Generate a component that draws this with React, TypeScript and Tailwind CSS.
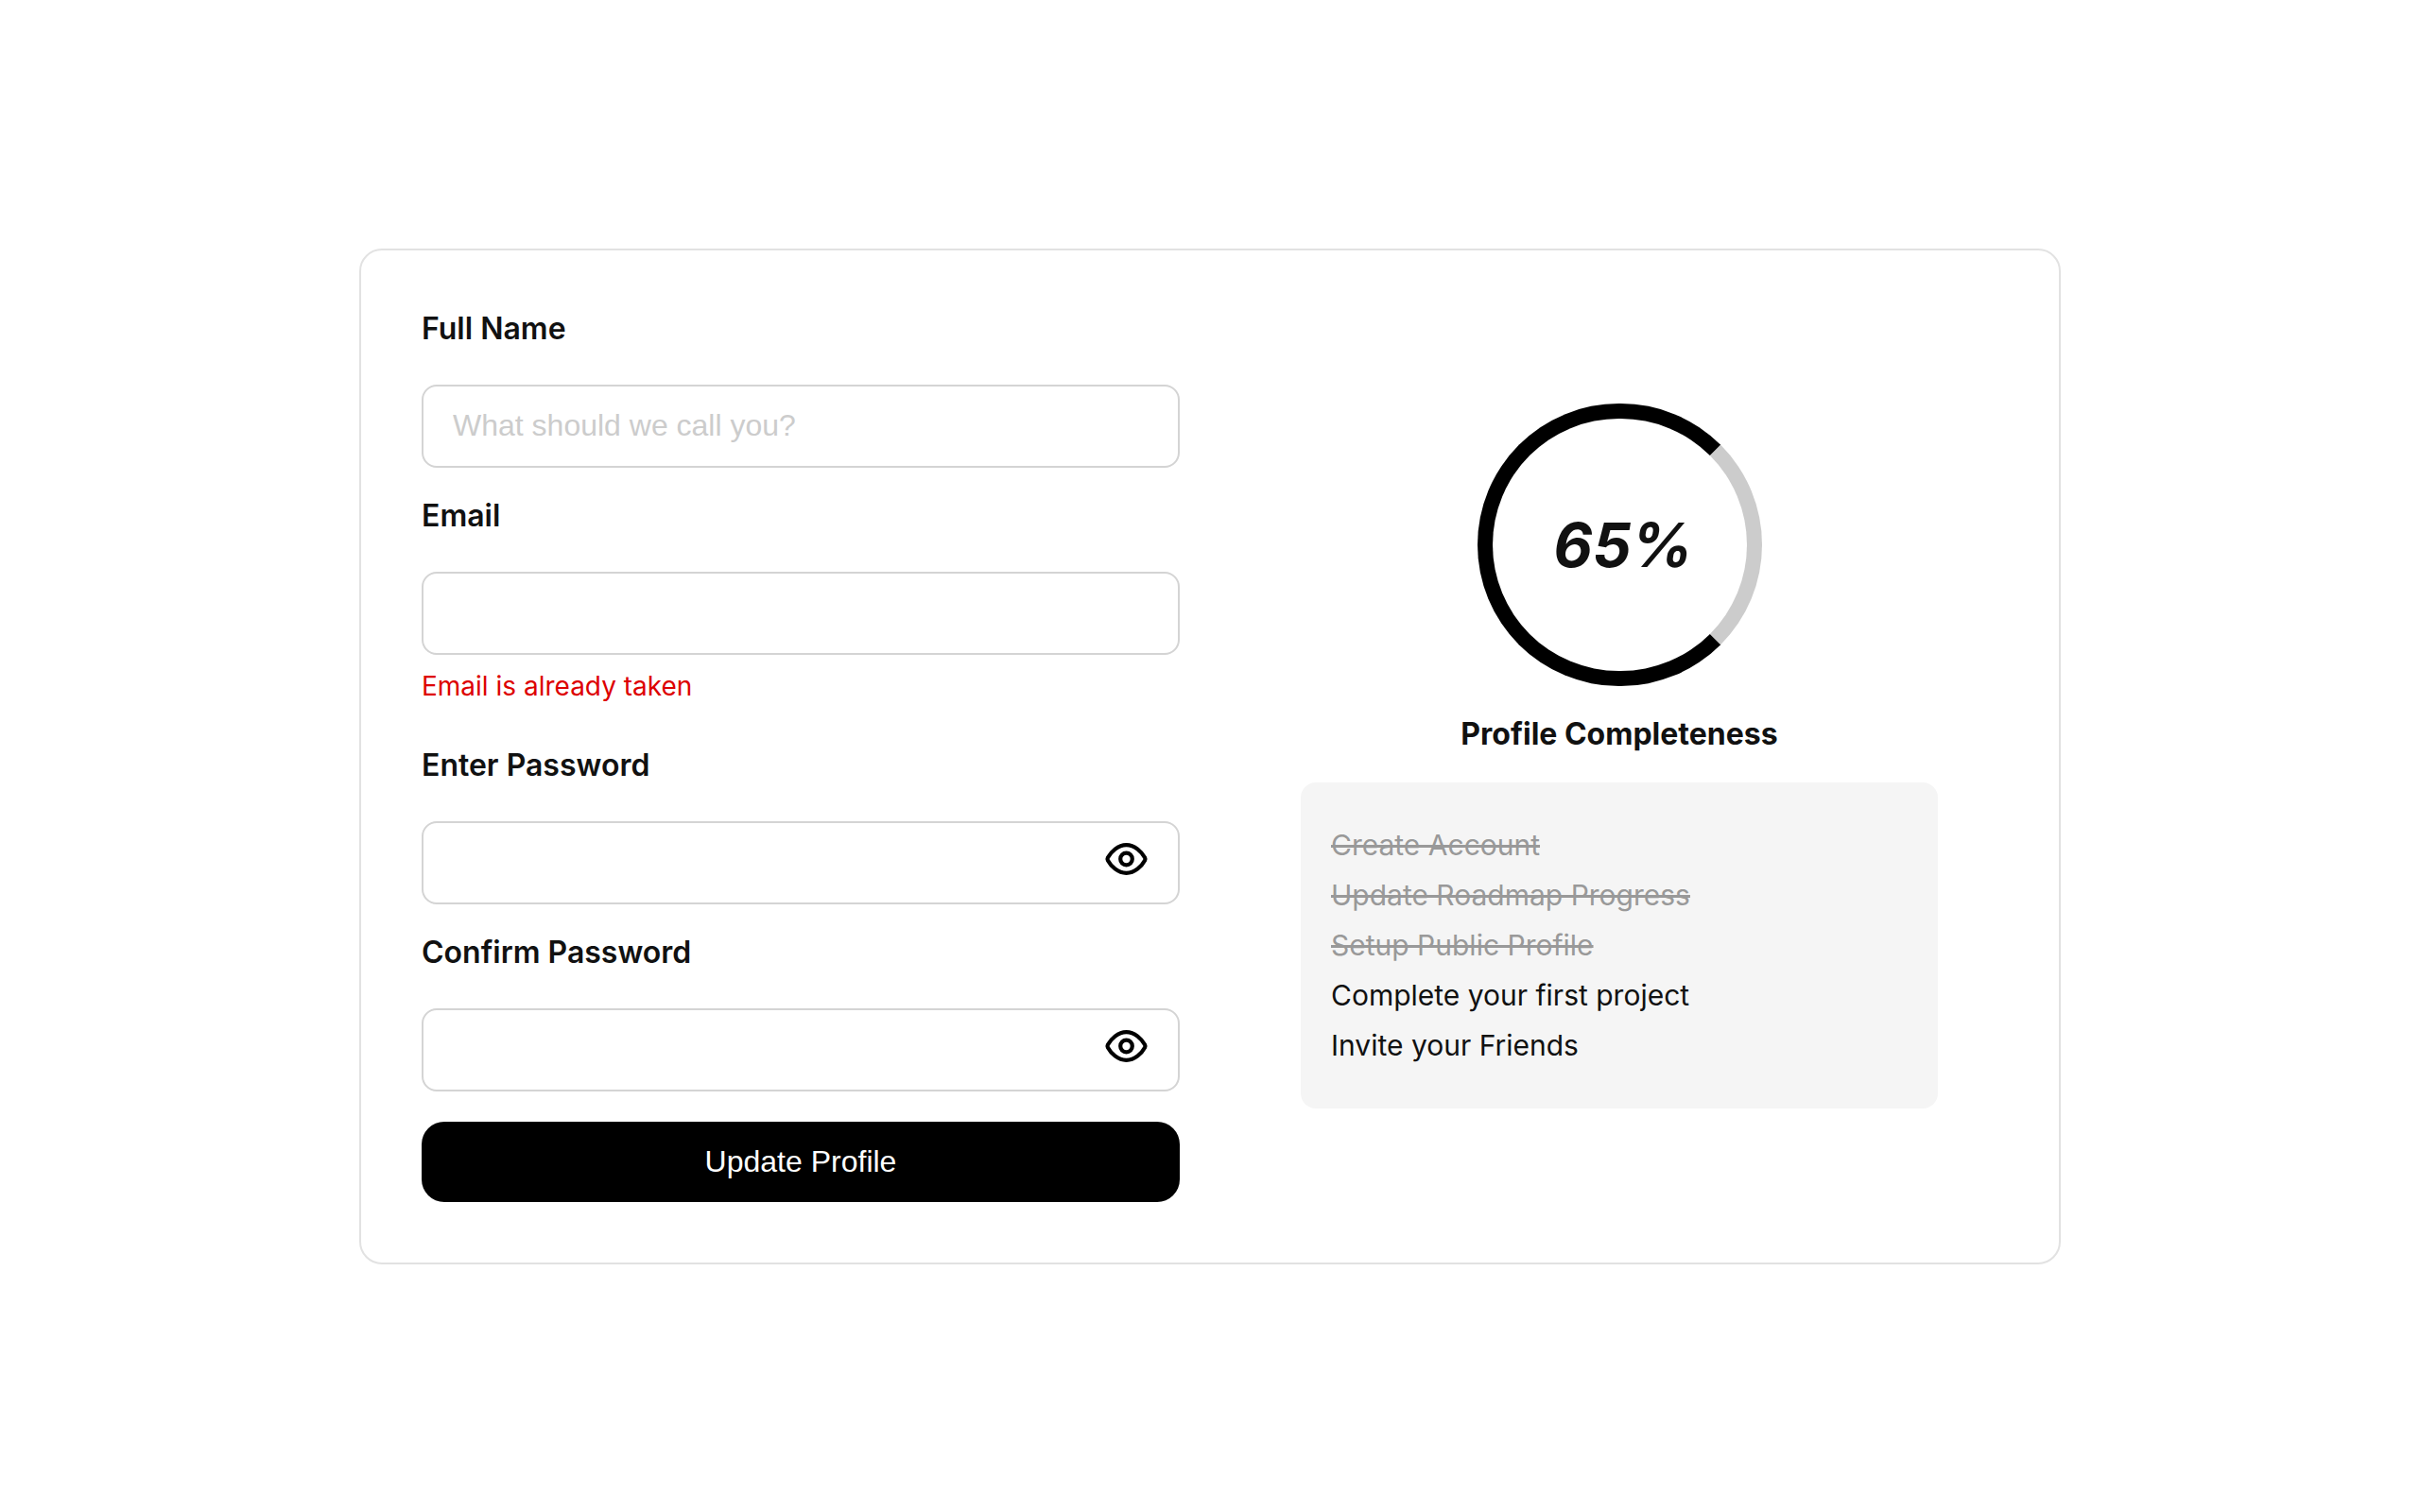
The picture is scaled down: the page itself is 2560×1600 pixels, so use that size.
import React, { useState } from "react";

const labelClass = "text-[32px] leading-[38px] font-semibold text-[#111111]";
const inputClass =
  "h-[88px] w-full rounded-2xl border-2 border-[#d4d4d4] bg-white px-[31px] font-['Liberation_Sans',Arial,sans-serif] text-[32px] text-[#111111] outline-none placeholder:text-[#cccccc]";

function EyeIcon() {
  return (
    <svg viewBox="0 0 48 48" className="size-12" fill="none" stroke="#000" strokeWidth="4.2" aria-hidden="true">
      <path
        d="M3.900 22.500C7.200 16.500 14.500 9.100 23.500 9.100s16.300 7.400 19.600 13.400c.5.900.5 2.100 0 3C39.800 31.500 32.500 38.900 23.500 38.900S7.200 31.500 3.900 25.500c-.5-.9-.5-2.100 0-3Z"
        strokeLinejoin="round"
      />
      <circle cx="23.500" cy="24" r="6.300" />
    </svg>
  );
}

function PasswordField({ id, label }: { id: string; label: string }) {
  const [visible, setVisible] = useState(false);
  return (
    <div className="flex flex-col gap-10">
      <label htmlFor={id} className={labelClass}>
        {label}
      </label>
      <div className="relative">
        <input id={id} type={visible ? "text" : "password"} className={inputClass} />
        <button
          type="button"
          aria-label={`Show ${label}`}
          onClick={() => setVisible(!visible)}
          className="absolute top-4 right-8"
        >
          <EyeIcon />
        </button>
      </div>
    </div>
  );
}

const tasks = [
  { name: "Create Account", done: true },
  { name: "Update Roadmap Progress", done: true },
  { name: "Setup Public Profile", done: true },
  { name: "Complete your first project", done: false },
  { name: "Invite your Friends", done: false },
];

export default function App() {
  return (
    <main className="flex min-h-screen items-center justify-center bg-white font-['Inter',sans-serif] text-[#111111]">
      <section className="grid w-full max-w-[1800px] grid-cols-2 gap-16 rounded-3xl border-2 border-[#e2e2e2] p-16">
        <form className="flex flex-col gap-8" onSubmit={(e) => e.preventDefault()}>
          <div className="flex flex-col gap-10">
            <label htmlFor="name" className={labelClass}>
              Full Name
            </label>
            <input id="name" type="text" placeholder="What should we call you?" className={inputClass} />
          </div>
          <div className="flex flex-col gap-10">
            <label htmlFor="email" className={labelClass}>
              Email
            </label>
            <div>
              <input id="email" type="email" aria-describedby="email-error" className={inputClass} />
              <p id="email-error" className="pt-4 pb-4 text-[28px] leading-[34px] text-[#dd0000]">
                Email is already taken
              </p>
            </div>
          </div>
          <PasswordField id="password" label="Enter Password" />
          <PasswordField id="confirm" label="Confirm Password" />
          <button
            type="submit"
            className="h-[85px] rounded-3xl bg-black font-['Liberation_Sans',Arial,sans-serif] text-[32px] text-white"
          >
            Update Profile
          </button>
        </form>
        <aside className="flex flex-col items-center justify-center px-16">
          <div className="flex h-[299px] w-[301px] items-center justify-center rounded-full border-16 border-black border-r-[#cccccc] pl-2">
            <span className="text-[64px] leading-none font-bold italic">65%</span>
          </div>
          <h2 className="mt-8 text-[32px] leading-[38px] font-bold">Profile Completeness</h2>
          <ul className="mt-8 w-full rounded-2xl bg-[#f5f5f5] px-8 py-10 text-[30px] leading-[53px]">
            {tasks.map((task) => (
              <li key={task.name} className={task.done ? "text-[#999999] line-through" : ""}>
                {task.name}
              </li>
            ))}
          </ul>
        </aside>
      </section>
    </main>
  );
}
